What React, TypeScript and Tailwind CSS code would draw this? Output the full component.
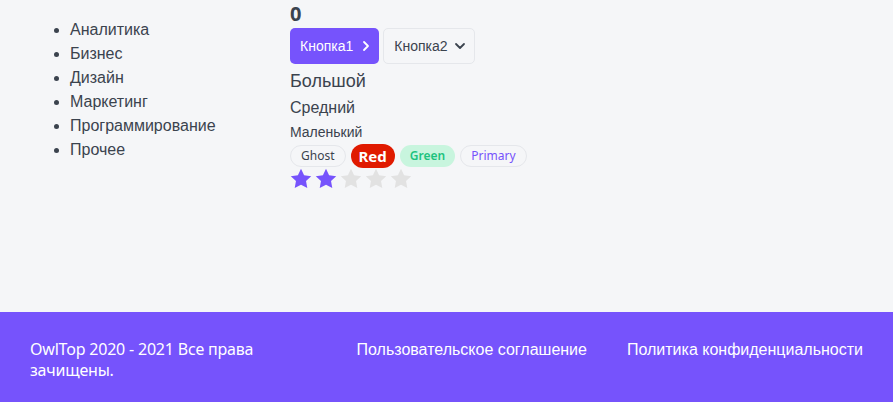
import React from "react";

const Star = ({ filled }: { filled: boolean }) => (
  <svg width="22" height="21" viewBox="0 0 24 23" className={filled ? "fill-[#7653fc]" : "fill-[#e2e2e2]"}>
    <path d="M12 0.8l3.4 7.1 7.8 1-5.7 5.4 1.4 7.7L12 18.3 5.1 22l1.4-7.7L0.8 8.9l7.8-1z" />
  </svg>
);

export default function App() {
  const sans = { fontFamily: '"Liberation Sans", Arial, sans-serif' };
  const fira = { fontFamily: '"Noto Sans", "Open Sans", sans-serif' };
  return (
    <div className="min-h-screen flex flex-col bg-[#f5f6f8] text-[#3b434e]" style={sans}>
      <main className="flex-1 grid grid-cols-[230px_1fr] gap-[30px] px-[30px]">
        <ul className="list-disc pl-[40px] pt-[18px] text-[16px] leading-[24px] marker:text-[#3b434e]">
          <li>Аналитика</li>
          <li>Бизнес</li>
          <li>Дизайн</li>
          <li>Маркетинг</li>
          <li>Программирование</li>
          <li>Прочее</li>
        </ul>
        <div className="flex flex-col items-start">
          <div className="text-[20px] leading-[28px] font-bold" style={fira}>0</div>
          <div className="flex gap-[4px]">
            <button className="h-[36px] flex items-center gap-[9px] pl-[10px] pr-[9px] rounded-[5px] bg-[#7653fc] text-white text-[14px]">
              Кнопка1
              <svg width="8" height="12" viewBox="0 0 8 12" fill="none" stroke="currentColor" strokeWidth="1.8" strokeLinecap="round" strokeLinejoin="round">
                <path d="M2 2l4 4-4 4" />
              </svg>
            </button>
            <button className="h-[36px] flex items-center gap-[6px] pl-[10px] pr-[8px] rounded-[5px] border border-[#e5e7eb] bg-[#f5f6f8] text-[#3b434e] text-[14px]">
              Кнопка2
              <svg width="12" height="8" viewBox="0 0 12 8" fill="none" stroke="currentColor" strokeWidth="1.8" strokeLinecap="round" strokeLinejoin="round">
                <path d="M2 2l4 4 4-4" />
              </svg>
            </button>
          </div>
          <div className="mt-[4px] text-[18px] leading-[27px]">Большой</div>
          <div className="text-[16px] leading-[26px]">Средний</div>
          <div className="text-[14px] leading-[20px] mt-[1px]">Маленький</div>
          <div className="flex gap-[5px] mt-[2px] items-center" style={fira}>
            <span className="h-[22px] flex items-center px-[10px] rounded-full border border-[#e5e7eb] text-[12px] text-[#3b434e]">Ghost</span>
            <span className="h-[24px] flex items-center px-[8px] rounded-full bg-[#e01a00] text-white text-[15px] font-bold">Red</span>
            <span className="h-[22px] flex items-center px-[10px] rounded-full bg-[#c8f5de] text-[#1dc37e] text-[12px] font-semibold">Green</span>
            <span className="h-[22px] flex items-center px-[10px] rounded-full border border-[#e5e7eb] text-[12px] text-[#7653fc]">Primary</span>
          </div>
          <div className="flex gap-[3px]">
            <Star filled />
            <Star filled />
            <Star filled={false} />
            <Star filled={false} />
            <Star filled={false} />
          </div>
        </div>
      </main>
      <footer className="h-[90px] bg-[#7653fc] text-white grid grid-cols-[1fr_auto_auto] gap-x-[40px] px-[30px] pt-[27px] text-[16px] leading-[21px]">
        <div className="max-w-[250px] tracking-[-0.2px]" style={fira}>OwlTop 2020 - 2021 Все права зачищены.</div>
        <a className="block">Пользовательское соглашение</a>
        <a className="block">Политика конфиденциальности</a>
      </footer>
    </div>
  );
}
